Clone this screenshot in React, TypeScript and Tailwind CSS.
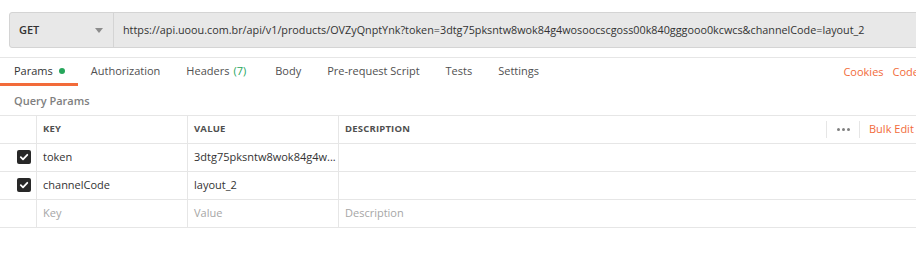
import React from "react";

const tabs = [
  { label: "Params", active: true },
  { label: "Authorization" },
  { label: "Headers", count: "(7)" },
  { label: "Body" },
  { label: "Pre-request Script" },
  { label: "Tests" },
  { label: "Settings" },
];

function Check() {
  return (
    <div className="w-[14px] h-[14px] rounded-[2px] bg-[#282828] flex items-center justify-center">
      <svg width="10" height="10" viewBox="0 0 10 10">
        <path d="M1.8 5.2 L4 7.3 L8.3 2.8" fill="none" stroke="#fff" strokeWidth="1.8" strokeLinecap="round" strokeLinejoin="round" />
      </svg>
    </div>
  );
}

export default function App() {
  return (
    <div className="w-[916px] h-[258px] bg-white overflow-hidden text-[11px] text-[#505050]" style={{ fontFamily: '"Open Sans", sans-serif' }}>
      <div className="pt-[12px] pl-[9px] pb-[9px]">
        <div className="flex h-[36px] w-[920px] border border-[#d4d4d4] rounded-[3px] bg-[#e8e8e8]">
          <div className="w-[104px] shrink-0 flex items-center justify-between pl-[9px] pr-[10px] border-r border-[#d4d4d4]">
            <span className="font-semibold text-[#333] text-[11px]">GET</span>
            <svg width="8" height="5" viewBox="0 0 8 5"><path d="M0 0 L8 0 L4 5 Z" fill="#8c8c8c" /></svg>
          </div>
          <div className="flex items-center pl-[9px] text-[#333] whitespace-nowrap text-[10.8px]">
            https://api.uoou.com.br/api/v1/products/OVZyQnptYnk?token=3dtg75pksntw8wok84g4wosoocscgoss00k840gggooo0kcwcs&amp;channelCode=layout_2
          </div>
        </div>
      </div>
      <div className="border-t border-[#e6e6e6] flex items-stretch h-[29px] whitespace-nowrap">
        {tabs.map((t) => (
          <div key={t.label} className={"flex items-center pt-[1px] border-b-[3px] " + (t.active ? "border-[#f26b3a] text-[#333] pl-[14px] pr-[13px]" : "border-transparent text-[#505050] px-[13px]") + (t.count ? " pr-[16px]" : "")}>
            {t.label}
            {t.count && <span className="ml-[4px] text-[#26a65b]">{t.count}</span>}
            {t.active && <span className="ml-[6px] w-[6px] h-[6px] rounded-full bg-[#26a65b] inline-block" />}
          </div>
        ))}
        <div className="flex-1" />
        <div className="flex items-center gap-[9px] text-[#f26b3a] pt-[1px] mr-[-3px]">
          <span>Cookies</span>
          <span>Code</span>
        </div>
      </div>
      <div className="pl-[14px] pt-[7px] pb-[5px] font-semibold text-[#808080] text-[11px]">Query Params</div>
      <div className="border-t border-[#e6e6e6]">
        <div className="flex h-[28px] border-b border-[#e6e6e6] text-[9.5px] font-bold text-[#505050] tracking-[0.2px]">
          <div className="w-[37px] border-r border-[#e6e6e6]" />
          <div className="w-[151px] border-r border-[#e6e6e6] flex items-center pl-[6px]">KEY</div>
          <div className="w-[151px] border-r border-[#e6e6e6] flex items-center pl-[6px]">VALUE</div>
          <div className="flex-1 flex items-center pl-[6px]">DESCRIPTION</div>
          <div className="flex items-center h-full py-[5px]">
            <div className="border-l border-[#e6e6e6] h-full w-[33px] flex items-center justify-center gap-[2px]">
              <span className="w-[3px] h-[3px] rounded-full bg-[#808080]" />
              <span className="w-[3px] h-[3px] rounded-full bg-[#808080]" />
              <span className="w-[3px] h-[3px] rounded-full bg-[#808080]" />
            </div>
            <div className="border-l border-[#e6e6e6] h-full flex items-center pl-[9px] w-[57px] text-[11px] font-normal text-[#f26b3a] tracking-normal whitespace-nowrap">Bulk Edit</div>
          </div>
        </div>
        {[
          { k: "token", v: "3dtg75pksntw8wok84g4w...", c: true },
          { k: "channelCode", v: "layout_2", c: true },
          { k: "Key", v: "Value", d: "Description", p: true },
        ].map((r, i) => (
          <div key={i} className={"flex h-[28px] border-b border-[#e6e6e6] " + (r.p ? "text-[#a6a6a6]" : "text-[#333]")}>
            <div className="w-[37px] border-r border-[#e6e6e6] flex items-center pl-[17px]">{r.c && <Check />}</div>
            <div className="w-[151px] border-r border-[#e6e6e6] flex items-center pl-[6px]">{r.k}</div>
            <div className="w-[151px] border-r border-[#e6e6e6] flex items-center pl-[6px] whitespace-nowrap">{r.v}</div>
            <div className="flex-1 flex items-center pl-[6px]">{r.d}</div>
          </div>
        ))}
      </div>
    </div>
  );
}
